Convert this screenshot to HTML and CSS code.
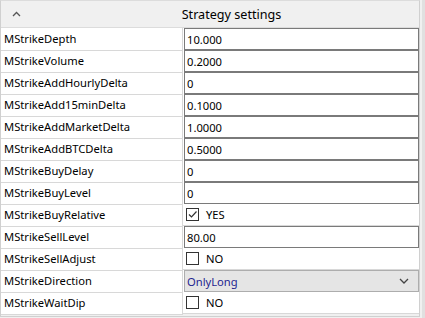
FILE: index.html
```html
<!doctype html>
<html lang="en">
<head>
<meta charset="UTF-8">
<title>Strategy settings</title>
<link rel="stylesheet" href="styles.css">
</head>
<body>
<div class="frame">
<div class="panel">
  <div class="head">
    <span class="caret"><svg width="9" height="6" viewBox="0 0 9 6"><path d="M1 5 L4.5 1.5 L8 5" fill="none" stroke="#555" stroke-width="1.3"/></svg></span>
    <span class="title">Strategy settings</span>
  </div>
  <div class="row"><div class="name">MStrikeDepth</div><div class="val"><div class="box">10.000</div></div></div>
  <div class="row"><div class="name">MStrikeVolume</div><div class="val"><div class="box">0.2000</div></div></div>
  <div class="row"><div class="name">MStrikeAddHourlyDelta</div><div class="val"><div class="box">0</div></div></div>
  <div class="row"><div class="name">MStrikeAdd15minDelta</div><div class="val"><div class="box">0.1000</div></div></div>
  <div class="row"><div class="name">MStrikeAddMarketDelta</div><div class="val"><div class="box">1.0000</div></div></div>
  <div class="row"><div class="name">MStrikeAddBTCDelta</div><div class="val"><div class="box">0.5000</div></div></div>
  <div class="row"><div class="name">MStrikeBuyDelay</div><div class="val"><div class="box">0</div></div></div>
  <div class="row"><div class="name">MStrikeBuyLevel</div><div class="val"><div class="box">0</div></div></div>
  <div class="row"><div class="name">MStrikeBuyRelative</div><div class="val plain"><span class="check"><svg width="11" height="11" viewBox="0 0 11 11"><path d="M2 5.5 L4.5 8 L9.5 2.5" fill="none" stroke="#333" stroke-width="1.2"/></svg></span>YES</div></div>
  <div class="row"><div class="name">MStrikeSellLevel</div><div class="val"><div class="box">80.00</div></div></div>
  <div class="row"><div class="name">MStrikeSellAdjust</div><div class="val plain"><span class="check"></span>NO</div></div>
  <div class="row"><div class="name">MStrikeDirection</div><div class="val"><div class="combo"><span>OnlyLong</span><svg width="10" height="6" viewBox="0 0 10 6"><path d="M1 1 L5 5 L9 1" fill="none" stroke="#444" stroke-width="1.3"/></svg></div></div></div>
  <div class="row last"><div class="name">MStrikeWaitDip</div><div class="val plain"><span class="check"></span>NO</div></div>
</div>
<div class="scroll"></div>
</div>
</body>
</html>
```

FILE: styles.css
```css
body {
    margin: 0;
    background: #ffffff;
    font-family: "Noto Sans", "Open Sans", sans-serif;
    font-size: 11.2px;
    color: #000;
}
.frame {
    display: flex;
    width: 425px;
    height: 318px;
    background: #f0f0f0;
}
.panel {
    width: 419px;
    height: 315px;
    border: 1px solid #d0d0d0;
    border-top-color: #dcdcdc;
    background: #f0f0f0;
}
.scroll {
    width: 3px;
    margin-left: 2px;
    background: #e0e0e0;
}
.head {
    display: flex;
    align-items: center;
    height: 26px;
    border-bottom: 1px solid #dcdcdc;
}
.caret {
    width: 30px;
    display: flex;
    justify-content: center;
}
.title {
    flex: 1;
    text-align: center;
    margin-left: 13px;
    font-size: 12.6px;
}
.row {
    display: grid;
    grid-template-columns: 182px 1fr;
    height: 22px;
    background: #fff;
}
.name {
    padding-left: 3px;
    line-height: 22px;
    border-bottom: 1px solid #d8d8d8;
    border-right: 1px solid #d8d8d8;
    white-space: nowrap;
}
.val {
    padding-left: 1px;
}
.box {
    height: 20px;
    border: 1px solid #7a7a7a;
    line-height: 21px;
    padding-left: 2px;
}
.plain {
    display: flex;
    align-items: center;
    padding-left: 3px;
    border-bottom: 1px solid #d8d8d8;
    height: 21px;
}
.check {
    width: 11px;
    height: 11px;
    border: 1px solid #333;
    margin-right: 7px;
    display: inline-flex;
    background: #fff;
}
.combo {
    height: 20px;
    border: 1px solid #adadad;
    background: #e5e5e5;
    color: #1f1f8f;
    display: flex;
    align-items: center;
    justify-content: space-between;
    padding: 0 9px 0 2px;
}
```
